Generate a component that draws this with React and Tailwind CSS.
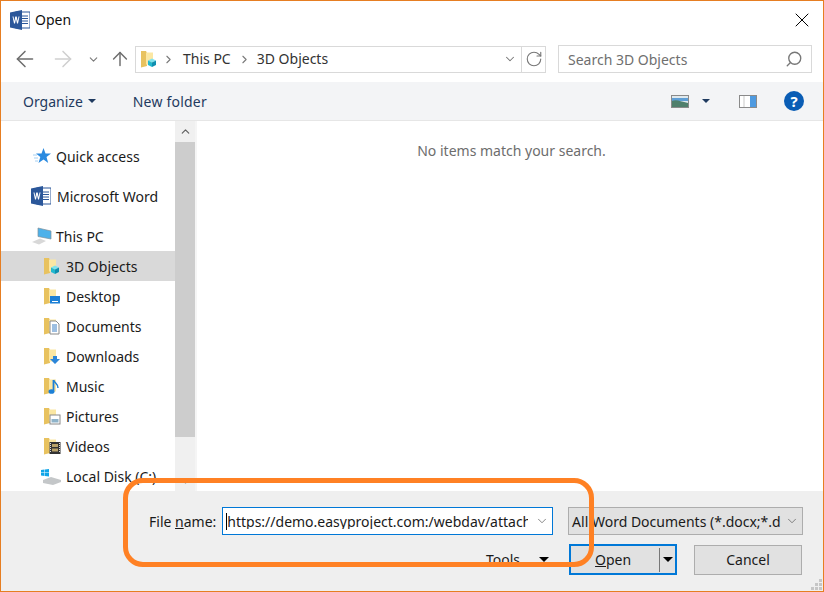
import { ArrowLeft, ArrowRight, ArrowUp, ChevronDown, ChevronRight, ChevronUp, RotateCw, Search, X } from 'lucide-react'

const FONT = "font-['Noto_Sans','Open_Sans',sans-serif]"

function WordIcon({ size = 20 }) {
  return (
    <svg width={size} height={size} viewBox="0 0 20 20">
      <rect x="6" y="2" width="14" height="16" fill="#fff" stroke="#2b579a" />
      <path d="M12 6h6M12 8.500h6M12 11h6M12 13.500h6" stroke="#2b579a" strokeWidth="1" />
      <path d="M0 2.500 12 0v20L0 17.500z" fill="#2b579a" />
      <path d="M2.500 6.500 4 13.500h1l1-4.500 1 4.500h1l1.500-7H8.500l-.8 4.500-1-4.500h-1.400l-1 4.500-.8-4.500z" fill="#fff" />
    </svg>
  )
}

function Folder({ children }) {
  return (
    <svg width="18" height="18" viewBox="0 0 18 18" className="shrink-0">
      <path d="M1 1h5l1 2v13l-6 1.500z" fill="#e8c25f" />
      <path d="M6 2.500h7v12H6z" fill="#fbe7a3" />
      {children}
    </svg>
  )
}

const cube = (
  <>
    <path d="M8 10.500 12 8.500l4 2-4 2z" fill="#7fe3ee" />
    <path d="M8 10.500l4 2V17l-4-2z" fill="#22b8cf" />
    <path d="M16 10.500l-4 2V17l4-2z" fill="#0e8fb0" />
  </>
)

const NAV_ITEMS = [
  { label: '3D Objects', icon: cube, selected: true },
  { label: 'Desktop', icon: <><rect x="7" y="9" width="10" height="7.500" fill="#1d80d6" /><path d="M9 14.500h6" stroke="#fff" /></> },
  { label: 'Documents', icon: <><path d="M7 4h6l3 3v10H7z" fill="#fff" stroke="#8a8a8a" /><path d="M9 8h5M9 10h5M9 12h5M9 14h5" stroke="#3a7fc4" /></> },
  { label: 'Downloads', icon: <path d="M10 9h4v3h3l-5 5-5-5h3z" fill="#2b86d9" /> },
  { label: 'Music', icon: <><path d="M10.500 3v10.500" stroke="#1d80d6" strokeWidth="1.800" /><path d="M10.500 3c1 3 5 4 4.500 8" stroke="#1d80d6" strokeWidth="1.500" fill="none" /><ellipse cx="8.500" cy="14.500" rx="3" ry="2.300" fill="#1d80d6" /></> },
  { label: 'Pictures', icon: <><rect x="7" y="8" width="10" height="9" fill="#fff" stroke="#8a8a8a" /><path d="M8.500 12h7v3.500h-7z" fill="#8fb3c9" /></> },
  { label: 'Videos', icon: <><rect x="6.500" y="5" width="11" height="12" fill="#333" /><path d="M9 7h6v3H9zM9 11.500h6v3H9z" fill="#b9a26a" /><path d="M7.500 6v10M16.500 6v10" stroke="#ddd" strokeDasharray="1 1" /></> },
]

function NavRow({ icon, label, selected }) {
  return (
    <div className={`flex h-[30px] shrink-0 items-center pl-[42px] ${selected ? 'bg-[#d9d9d9]' : ''}`}>
      <Folder>{icon}</Folder>
      <span className="ml-[5px] mt-[2px] text-[#1a1a1a]">{label}</span>
    </div>
  )
}

export default function App() {
  return (
    <div className={`relative flex h-[592px] w-[824px] flex-col overflow-hidden border border-[#e67e22] bg-white text-[14px] leading-none ${FONT}`}>
      {/* Title bar */}
      <div className="flex h-[37px] shrink-0 items-center pl-[9px] pr-[9px]">
        <WordIcon />
        <span className="ml-[5px] text-[#111]">Open</span>
        <X size={24} strokeWidth={1} className="ml-auto text-black" />
      </div>

      {/* Address row */}
      <div className="flex h-[44px] shrink-0 items-center pb-[2px] pl-[11px] pr-[11px]">
        <ArrowLeft size={26} strokeWidth={1.4} className="text-[#6d6d6d]" />
        <ArrowRight size={26} strokeWidth={1.4} className="ml-[12px] text-[#cfcfcf]" />
        <ChevronDown size={13} strokeWidth={2} className="ml-[11px] text-[#7a7a7a]" />
        <ArrowUp size={22} strokeWidth={1.6} className="ml-[9px] text-[#6d6d6d]" />
        <div className="ml-[4px] flex h-[27px] w-[411px] items-center border border-[#d9d9d9] pl-[4px]">
          <Folder>{cube}</Folder>
          <ChevronRight size={13} strokeWidth={2} className="ml-[4px] text-[#7a7a7a]" />
          <span className="ml-[8px] text-[#333]">This PC</span>
          <ChevronRight size={13} strokeWidth={2} className="ml-[7px] text-[#7a7a7a]" />
          <span className="ml-[6px] text-[#333]">3D Objects</span>
          <ChevronDown size={14} strokeWidth={1.8} className="ml-auto mr-[4px] text-[#777]" />
          <div className="flex h-full w-[24px] items-center justify-center border-l border-[#d9d9d9]">
            <RotateCw size={18} strokeWidth={1.5} className="text-[#777]" />
          </div>
        </div>
        <div className="ml-[12px] flex h-[28px] w-[254px] items-center justify-between border border-[#d9d9d9] pl-[9px] pr-[8px] text-[#6f6f6f]">
          <span className="mt-[2px]">Search 3D Objects</span>
          <Search size={18} strokeWidth={1.8} className="-scale-x-100 text-[#777]" />
        </div>
      </div>

      {/* Toolbar */}
      <div className="flex h-[39px] shrink-0 items-center border-b border-[#e6e6e6] bg-[#f3f4f6] pl-[22px] pr-[19px] text-[#1f3a5f]">
        <span className="mt-[2px]">Organize</span>
        <span className="ml-[5px] h-0 w-0 border-x-[4px] border-t-[4px] border-x-transparent border-t-[#1f3a5f]" />
        <span className="ml-[37px] mt-[2px] tracking-[0.2px]">New folder</span>
        <svg width="18" height="13" viewBox="0 0 18 13" className="ml-auto">
          <rect x="0.500" y="0.500" width="17" height="12" fill="#dfe9ee" stroke="#8a8a8a" />
          <path d="M1 3h16v3H1z" fill="#5f9fd6" />
          <path d="M1 6c4-2 8 0 16 2v4H1z" fill="#4f7f6c" />
        </svg>
        <span className="ml-[13px] h-0 w-0 border-x-[4px] border-t-[4px] border-x-transparent border-t-[#1f3a5f]" />
        <svg width="18" height="13" viewBox="0 0 18 13" className="ml-[29px]">
          <rect x="0.500" y="0.500" width="17" height="12" fill="#fff" stroke="#8a8a8a" />
          <rect x="11" y="1" width="6" height="11" fill="#4e9ae0" />
          <path d="M5 1v11" stroke="#c9c9c9" />
        </svg>
        <span className="ml-[27px] flex h-[20px] w-[20px] items-center justify-center rounded-full bg-[#0a5db5] text-[15px] font-bold text-white">?</span>
      </div>

      {/* Body */}
      <div className="flex min-h-0 flex-1">
        <div className="flex w-[174px] shrink-0 flex-col overflow-hidden pt-[20px] text-[#1a1a1a]">
          <div className="flex h-[30px] shrink-0 items-center pl-[32px]">
            <svg width="18" height="18" viewBox="0 0 18 18">
              <path d="M10.500 1l2 5.500H18l-4.500 3.500 1.700 6-4.700-3.500L5.500 16l1.800-6L3 6.500h5.500z" fill="#2a8ae0" />
              <path d="M0 8h4M1 11h4M2 14h3" stroke="#8fc4ef" strokeWidth="0.800" />
            </svg>
            <span className="ml-[5px] mt-[2px]">Quick access</span>
          </div>
          <div className="mt-[10px] flex h-[30px] shrink-0 items-center pl-[30px]">
            <WordIcon />
            <span className="ml-[6px] mt-[2px]">Microsoft Word</span>
          </div>
          <div className="mt-[10px] flex h-[30px] shrink-0 items-center pl-[31px]">
            <svg width="20" height="18" viewBox="0 0 20 18">
              <path d="M6 1l13 3v8L6 9.500z" fill="#4db1ea" stroke="#7f8f9a" strokeWidth="0.700" />
              <path d="M0 15l8-3.500 6 2.500-7 3.500z" fill="#d8d8d8" />
            </svg>
            <span className="ml-[4px] mt-[2px]">This PC</span>
          </div>
          {NAV_ITEMS.map((item) => (
            <NavRow key={item.label} {...item} />
          ))}
          <div className="flex h-[30px] shrink-0 items-center pl-[40px]">
            <svg width="20" height="18" viewBox="0 0 20 18" className="shrink-0">
              <path d="M0 3l3.500-.500v3H0zM4 2.400 8 2v3.500H4zM0 6h3.500v3L0 8.500zM4 6h4v3.500l-4-.500z" fill="#11a5e8" />
              <path d="M2 13l8-3 10 3v2l-8 3-10-2z" fill="#c4c7c9" />
            </svg>
            <span className="ml-[5px] mt-[2px] whitespace-nowrap">Local Disk (C:)</span>
          </div>
        </div>

        {/* Scrollbar */}
        <div className="flex w-[20px] shrink-0 flex-col bg-[#f0f0f0]">
          <div className="flex h-[21px] items-center justify-center">
            <ChevronUp size={13} strokeWidth={2.2} className="text-[#606060]" />
          </div>
          <div className="h-[295px] bg-[#cdcdcd]" />
          <div className="mt-auto flex h-[20px] items-center justify-center">
            <ChevronDown size={13} strokeWidth={2.2} className="text-[#a0a0a0]" />
          </div>
        </div>

        <div className="flex-1 border-l-2 border-[#f5f5f5] pl-[3px] pt-[23px] text-center text-[#6d6d6d]">
          No items match your search.
        </div>
      </div>

      {/* Footer */}
      <div className="relative flex h-[100px] shrink-0 flex-col gap-[9px] bg-[#efefef] pl-[148px] pr-[20px] pt-[16px] text-[#1a1a1a]">
        <div className="flex h-[28px] items-center">
          <span className="mt-[2px] whitespace-nowrap">
            File <span className="underline">n</span>ame:
          </span>
          <div className="ml-[6px] flex h-full w-[331px] items-center overflow-hidden border border-[#0078d7] bg-white pl-[3px]">
            <span className="h-[17px] w-px shrink-0 bg-black" />
            <span className="mt-[2px] w-[301px] shrink-0 overflow-hidden whitespace-nowrap">https://demo.easyproject.com:/webdav/attachments</span>
            <ChevronDown size={14} strokeWidth={1.2} className="ml-[7px] shrink-0 text-[#555]" />
          </div>
          <div className="ml-[15px] flex h-full w-[235px] items-center justify-between overflow-hidden border border-[#adadad] bg-[#e1e1e1] pl-[3px] pr-[3px]">
            <span className="mt-[2px] whitespace-nowrap">All Word Documents (*.docx;*.d</span>
            <ChevronDown size={14} strokeWidth={1.2} className="shrink-0 text-[#555]" />
          </div>
        </div>
        <div className="flex h-[31px] items-center">
          <span className="ml-[337px]">Tools</span>
          <span className="ml-[19px] h-0 w-0 border-x-[5px] border-t-[5px] border-x-transparent border-t-black" />
          <div className="ml-[20px] flex h-full w-[108px] items-center border-2 border-[#0078d7] bg-[#e1e1e1]">
            <span className="w-[88px] pl-[24px]"><span className="underline">O</span>pen</span>
            <span className="h-[24px] w-[1px] bg-[#777]" />
            <span className="ml-[3px] h-0 w-0 border-x-[5px] border-t-[5px] border-x-transparent border-t-black" />
          </div>
          <div className="ml-[17px] flex h-[30px] w-[108px] items-center justify-center border border-[#adadad] bg-[#e1e1e1]">Cancel</div>
        </div>
        <svg width="12" height="12" viewBox="0 0 12 12" className="absolute bottom-0 right-0">
          <path d="M8 0h3v3H8zM4 4h3v3H4zM8 4h3v3H8zM0 8h3v3H0zM4 8h3v3H4zM8 8h3v3H8z" fill="#c6c6c6" />
        </svg>
      </div>

      {/* Hand-drawn highlight */}
      <div className="absolute left-[122px] top-[477px] h-[89px] w-[471px] rounded-[20px] border-[5px] border-[#ff8124]" />
    </div>
  )
}
